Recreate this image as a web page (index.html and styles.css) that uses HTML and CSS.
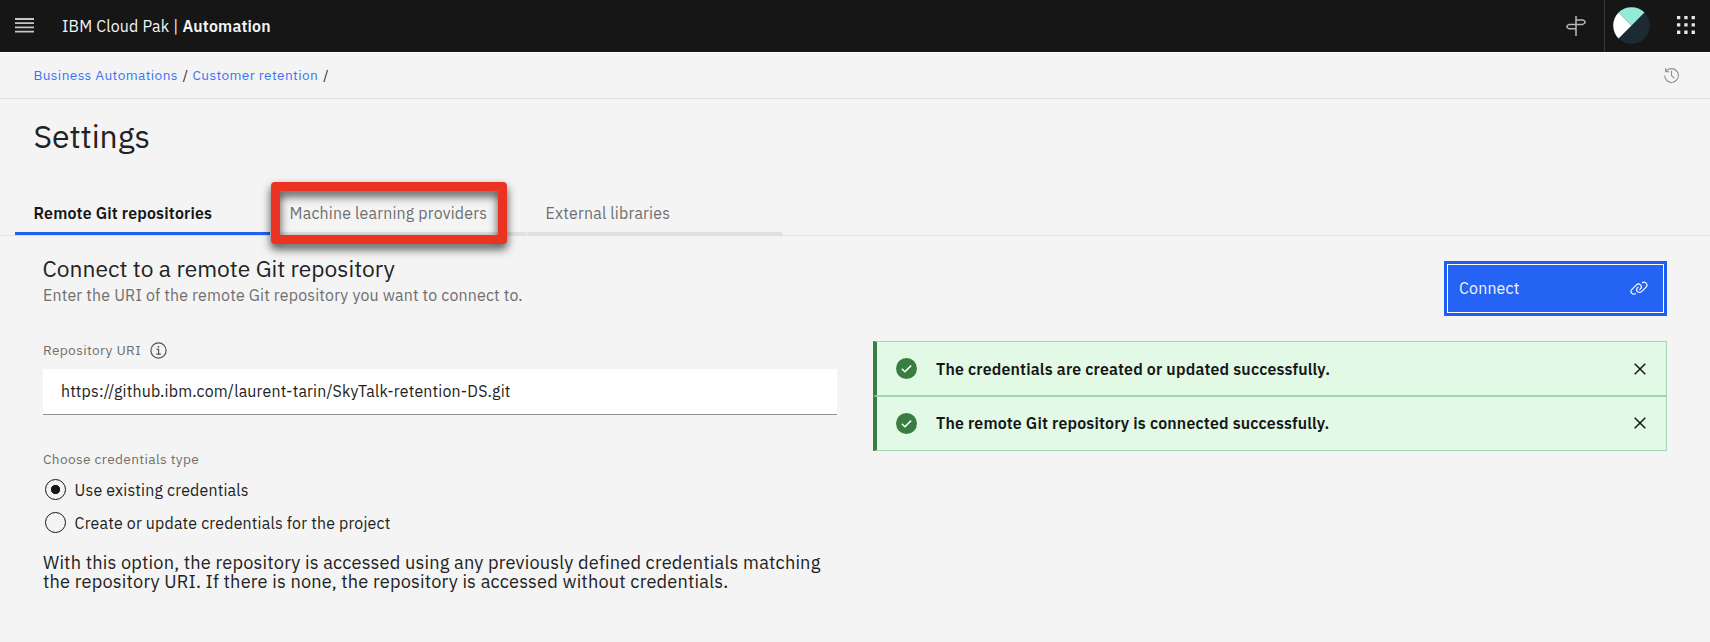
FILE: index.html
```html
<!DOCTYPE html>
<html lang="en">
<head>
<meta charset="utf-8">
<title>Settings</title>
<link rel="stylesheet" href="styles.css">
</head>
<body>
<header class="topbar">
  <svg class="menu" width="19" height="15" viewBox="0 0 19 15"><path d="M0 1h19M0 5.2h19M0 9.4h19M0 13.6h19" stroke="#c4c8c4" stroke-width="1.8"/></svg>
  <div class="brand">IBM Cloud Pak | <b class="suite">Automation</b></div>
  <div class="tools">
    <svg class="signpost" width="20" height="20" viewBox="0 0 20 20" fill="none" stroke="#b9b9b9" stroke-width="1.500" stroke-linejoin="round"><path d="M10 0v20M10 3.900h6.800q2.200.900 2.400 2.300-.2 1.400-2.400 2.200H10M10 8.400H3.200Q1 9.200.8 10.600q.2 1.400 2.400 2.200H10"/></svg>
    <i class="divider"></i>
    <svg class="avatar" width="37" height="37" viewBox="0 0 37 37"><circle cx="18.500" cy="18.500" r="18.300" fill="#1c2b33"/><path d="M18.500 18.500 5.560 5.560A18.300 18.300 0 0 1 31.440 5.560z" fill="#92ebd9"/><path d="M18.500 18.500 5.560 5.560A18.300 18.300 0 0 0 5.560 31.440z" fill="#fff"/></svg>
    <svg class="apps" width="18" height="18" viewBox="0 0 18 18" fill="#e8e8e8"><path d="M0 0h3.300v3.300H0zM7.300 0h3.300v3.300H7.300zM14.600 0h3.300v3.300h-3.300zM0 7.300h3.300v3.300H0zM7.300 7.300h3.300v3.300H7.300zM14.600 7.300h3.300v3.300h-3.300zM0 14.600h3.300v3.300H0zM7.300 14.600h3.300v3.300H7.300zM14.600 14.600h3.300v3.300h-3.300z"/></svg>
  </div>
</header>
<nav class="crumbs">
  <a class="crumb">Business Automations</a><span class="slash">/</span><a class="crumb">Customer retention</a><span class="slash">/</span>
  <svg class="history" width="17" height="17" viewBox="0 0 32 32" fill="#8d8d8d"><path d="M20.590 22 15 16.410V7h2v8.580l5 5.010z"/><path d="M16 2A13.940 13.940 0 0 0 6 6.230V2H4v8h8V8H7.080A12 12 0 1 1 4 16H2A14 14 0 1 0 16 2z"/></svg>
</nav>
<h1 class="title">Settings</h1>
<div class="tabs">
  <div class="tab active">Remote Git repositories</div>
  <div class="tab">Machine learning providers<i class="marker"></i></div>
  <div class="tab">External libraries</div>
</div>
<main class="content">
  <section class="form">
    <h2 class="heading">Connect to a remote Git repository</h2>
    <p class="sub">Enter the URI of the remote Git repository you want to connect to.</p>
    <div class="label uri-label">Repository URI
      <svg width="17" height="17" viewBox="0 0 17 17" fill="none" stroke="#525252" stroke-width="1.200"><circle cx="8.500" cy="8.500" r="7.600"/><path d="M6.600 7.400h2v4.700M6.300 12.200h4.600"/><circle cx="8.400" cy="4.800" r=".9" fill="#525252" stroke="none"/></svg>
    </div>
    <div class="input">https://github.ibm.com/laurent-tarin/SkyTalk-retention-DS.git</div>
    <div class="label type-label">Choose credentials type</div>
    <div class="radio"><i class="dot on"></i>Use existing credentials</div>
    <div class="radio"><i class="dot"></i>Create or update credentials for the project</div>
    <p class="hint">With this option, the repository is accessed using any previously defined credentials matching<br>the repository URI. If there is none, the repository is accessed without credentials.</p>
  </section>
  <section class="side">
    <button class="connect">Connect
      <svg width="18" height="18" viewBox="0 0 32 32" fill="#fff"><path d="M29.250 6.760a6 6 0 0 0-8.500 0l1.420 1.420a4 4 0 1 1 5.670 5.670l-8 8a4 4 0 1 1-5.670-5.660l1.410-1.420-1.410-1.420-1.420 1.420a6 6 0 0 0 0 8.500A6 6 0 0 0 17 25a6 6 0 0 0 4.270-1.760l8-8a6 6 0 0 0-.02-8.480z"/><path d="M4.190 24.820a4 4 0 0 1 0-5.670l8-8a4 4 0 0 1 5.670 0A3.940 3.940 0 0 1 19 14a4 4 0 0 1-1.170 2.850L15.710 19l1.420 1.420 2.120-2.120a6 6 0 0 0-8.510-8.510l-8 8a6 6 0 0 0 0 8.510A6 6 0 0 0 7 28a6.070 6.070 0 0 0 4.280-1.760l-1.420-1.420a4 4 0 0 1-5.670 0z"/></svg>
    </button>
    <div class="notice first">
      <svg class="check" width="21" height="21" viewBox="0 0 21 21"><circle cx="10.500" cy="10.500" r="10.500" fill="#3a7d40"/><path d="M5.800 10.800l3.100 3 6.200-6.200" fill="none" stroke="#fff" stroke-width="1.500"/></svg>
      The credentials are created or updated successfully.
      <svg class="close" width="12" height="12" viewBox="0 0 12 12"><path d="M.7.700l10.600 10.600M11.300.700.700 11.300" stroke="#161616" stroke-width="1.500"/></svg>
    </div>
    <div class="notice">
      <svg class="check" width="21" height="21" viewBox="0 0 21 21"><circle cx="10.500" cy="10.500" r="10.500" fill="#3a7d40"/><path d="M5.800 10.800l3.100 3 6.200-6.200" fill="none" stroke="#fff" stroke-width="1.500"/></svg>
      The remote Git repository is connected successfully.
      <svg class="close" width="12" height="12" viewBox="0 0 12 12"><path d="M.7.700l10.600 10.600M11.300.700.700 11.300" stroke="#161616" stroke-width="1.500"/></svg>
    </div>
  </section>
</main>
</body>
</html>
```
FILE: styles.css
```css
* { box-sizing: border-box; }
body {
  margin: 0;
  height: 642px;
  overflow: hidden;
  background: #f4f4f4;
  color: #222;
  font-family: "IBM Plex Sans", Roboto, "Liberation Sans", sans-serif;
  font-size: 15.930px;
  letter-spacing: .182px;
  white-space: nowrap;
}
svg { display: block; flex: none; }
h1, h2, p { margin: 0; font-weight: 400; }

.topbar {
  height: 52px;
  display: flex;
  align-items: center;
  padding-left: 15px;
  background: #161616;
  color: #f4f4f4;
}
.menu { margin-bottom: 1px; }
.brand { margin-left: 28px; line-height: 20px; padding-bottom: 1px; }
.suite { font-weight: 600; }
.tools { margin-left: auto; display: flex; align-items: center; height: 52px; }
.signpost { margin-right: 18px; }
.divider { width: 1px; height: 52px; background: #393939; margin-right: 8px; }
.avatar { margin: 0 27px 2px 0; }
.apps { margin: 0 15px 2px 0; }

.crumbs {
  height: 47px;
  border-bottom: 1px solid #e0e0e0;
  box-shadow: inset 0 1px #fff;
  display: flex;
  align-items: center;
  padding: 0 30px 1px 33.400px;
  font-size: 13.700px;
  letter-spacing: .365px;
}
.crumb { color: #4073f2; }
.slash { margin: 0 4px 0 5px; }
.history { margin: 2px 0 0 auto; }

.title { height: 76px; padding-left: 33.500px; font-size: 31.900px; line-height: 75px; letter-spacing: 0; }

.tabs { height: 61px; display: flex; align-items: flex-end; gap: 1px; padding-left: 15px; border-bottom: 1px solid #e0e0e0; }
.tab { position: relative; width: 255px; height: 44px; line-height: 45px; padding-left: 18.600px; color: #6f6f6f; border-bottom: 3px solid #e0e0e0; }
.tab.active { color: #161616; font-weight: 600; border-bottom-color: #1f62ee; }
.marker {
  position: absolute; left: 0; top: -9px; width: 236px; height: 62px;
  border: 9px solid #ea3323; border-radius: 4px;
  filter: drop-shadow(0 5px 5px rgba(0,0,0,.7));
}

.content { display: grid; grid-template-columns: 794px 794px; column-gap: 36px; padding-left: 43px; }
.heading { margin-top: 18px; font-size: 22.800px; line-height: 29px; letter-spacing: 0; margin-left: -.4px; }
.sub { line-height: 24px; color: #6f6f6f; }
.label { color: #6f6f6f; font-size: 13.700px; height: 20px; line-height: 20px; letter-spacing: .365px; }
.uri-label { display: flex; gap: 9px; align-items: center; margin-top: 33px; }
.input { margin-top: 9px; height: 46px; padding-left: 18px; background: #fff; border-bottom: 1px solid #8d8d8d; line-height: 45px; }
.type-label { margin-top: 34px; margin-bottom: 4px; }
.radio { display: flex; align-items: center; height: 33px; gap: 9px; padding-left: 1.600px; line-height: 20px; }
.dot { width: 21px; height: 21px; border: 1.200px solid #161616; border-radius: 50%; }
.dot.on { background: radial-gradient(circle, #161616 4.300px, transparent 5px); }
.hint { margin-top: 14px; font-size: 18.200px; line-height: 18.500px; }

.side { padding-top: 25px; }
.connect {
  display: flex; align-items: center; justify-content: space-between;
  width: 223px; height: 55px; margin-left: auto; padding: 0 16px 2px 12px;
  border: 3px solid #1f5ff0; background: #2563f5; box-shadow: inset 0 0 0 1px #fff;
  color: #f4f4f4; font: inherit; letter-spacing: .182px;
}
.notice {
  display: flex; align-items: center; height: 55px; padding: 0 20px 1px 19px;
  background: #e2fae5; border: 1px solid #a5d5b0; border-left: 4px solid #3a7d40;
  color: #161616; font-weight: 600;
}
.notice.first { margin-top: 25px; padding-bottom: 0; }
.check { margin-right: 19px; }
.close { margin-left: auto; }
```
